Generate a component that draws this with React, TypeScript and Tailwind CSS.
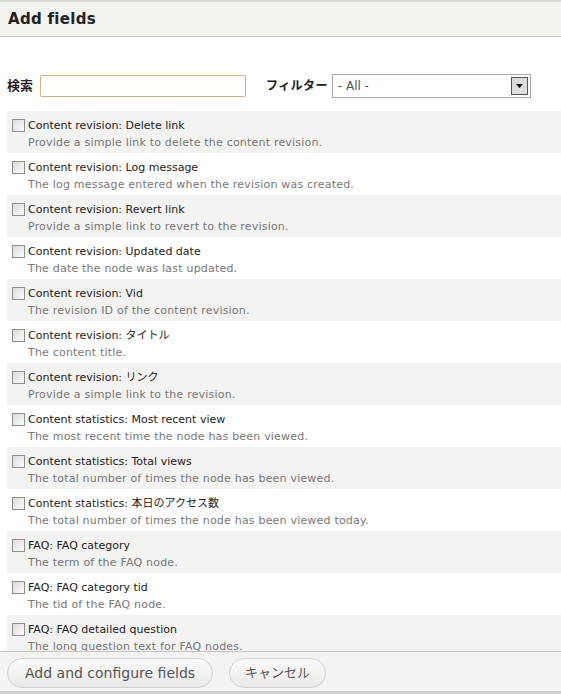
import React from "react";

type Field = { title: string; desc: string };

const fields: Field[] = [
  { title: "Content revision: Delete link", desc: "Provide a simple link to delete the content revision." },
  { title: "Content revision: Log message", desc: "The log message entered when the revision was created." },
  { title: "Content revision: Revert link", desc: "Provide a simple link to revert to the revision." },
  { title: "Content revision: Updated date", desc: "The date the node was last updated." },
  { title: "Content revision: Vid", desc: "The revision ID of the content revision." },
  { title: "Content revision: タイトル", desc: "The content title." },
  { title: "Content revision: リンク", desc: "Provide a simple link to the revision." },
  { title: "Content statistics: Most recent view", desc: "The most recent time the node has been viewed." },
  { title: "Content statistics: Total views", desc: "The total number of times the node has been viewed." },
  { title: "Content statistics: 本日のアクセス数", desc: "The total number of times the node has been viewed today." },
  { title: "FAQ: FAQ category", desc: "The term of the FAQ node." },
  { title: "FAQ: FAQ category tid", desc: "The tid of the FAQ node." },
  { title: "FAQ: FAQ detailed question", desc: "The long question text for FAQ nodes." },
];

const font = "font-['DejaVu_Sans','Noto_Sans_CJK_JP',sans-serif]";

function Checkbox() {
  return (
    <span className="mt-[2px] mr-[3px] inline-block h-[13px] w-[13px] shrink-0 border border-[#8f8f8f] bg-gradient-to-br from-[#dcdcdc] to-[#fbfbfb]" />
  );
}

export default function App() {
  return (
    <div className={`flex h-[694px] w-[561px] flex-col overflow-hidden bg-white ${font}`}>
      <div className="h-[2px] bg-[#d6d6d3]" />
      <div className="flex h-[35px] items-center border-b border-[#c8c8c5] bg-[#f2f2ef] px-[8px]">
        <h1 className="text-[15px] font-bold tracking-[0.3px] text-[#222]">Add fields</h1>
      </div>

      <div className="flex items-center pt-[37px] pb-[13px] pl-[7px] text-[13px]">
        <label className="mr-[7px] font-bold text-[#222]">検索</label>
        <input
          type="text"
          className="h-[22px] w-[206px] rounded-[2px] border border-[#cbb57c] bg-white outline-none"
        />
        <label className="ml-[20px] mr-[4px] text-[12px] font-bold tracking-[0.4px] text-[#222]">フィルター</label>
        <div className="flex h-[24px] w-[199px] items-center border border-[#a5acb2] bg-white pl-[5px]">
          <span className="flex-1 text-[12px] text-[#555]">- All -</span>
          <span className="mr-[2px] flex h-[18px] w-[17px] items-center justify-center border border-[#555] bg-[#dcdcdc]">
            <svg width="7" height="4" viewBox="0 0 7 4">
              <path d="M0 0h7L3.5 4z" fill="#111" />
            </svg>
          </span>
        </div>
      </div>

      <div className="min-h-0 flex-1 overflow-hidden pl-[7px]">
        {fields.map((f, i) => (
          <div
            key={f.title}
            className={`flex h-[42px] px-[5px] pt-[6px] ${i % 2 === 0 ? "bg-[#f3f3f1]" : "bg-white"}`}
          >
            <Checkbox />
            <div className="text-[11px] leading-[17px]">
              <div className="text-[#222]">{f.title}</div>
              <div className="tracking-[0.2px] text-[#777]">{f.desc}</div>
            </div>
          </div>
        ))}
      </div>

      <div className="flex h-[40px] shrink-0 items-center gap-[16px] border-t border-[#c4c4c1] bg-[#f3f3f1] px-[7px] pt-[2px]">
        <button className="h-[30px] whitespace-nowrap rounded-full border border-[#d2d2d0] bg-gradient-to-b from-[#fbfbfb] to-[#e9e9e7] px-[17px] text-[14px] leading-none text-[#555]">
          Add and configure fields
        </button>
        <button className="h-[30px] whitespace-nowrap rounded-full border border-[#d2d2d0] bg-gradient-to-b from-[#fbfbfb] to-[#e9e9e7] px-[15px] text-[13px] leading-none text-[#555]">
          キャンセル
        </button>
      </div>
      <div className="h-[3px] shrink-0 bg-[#d0d0cd]" />
    </div>
  );
}
